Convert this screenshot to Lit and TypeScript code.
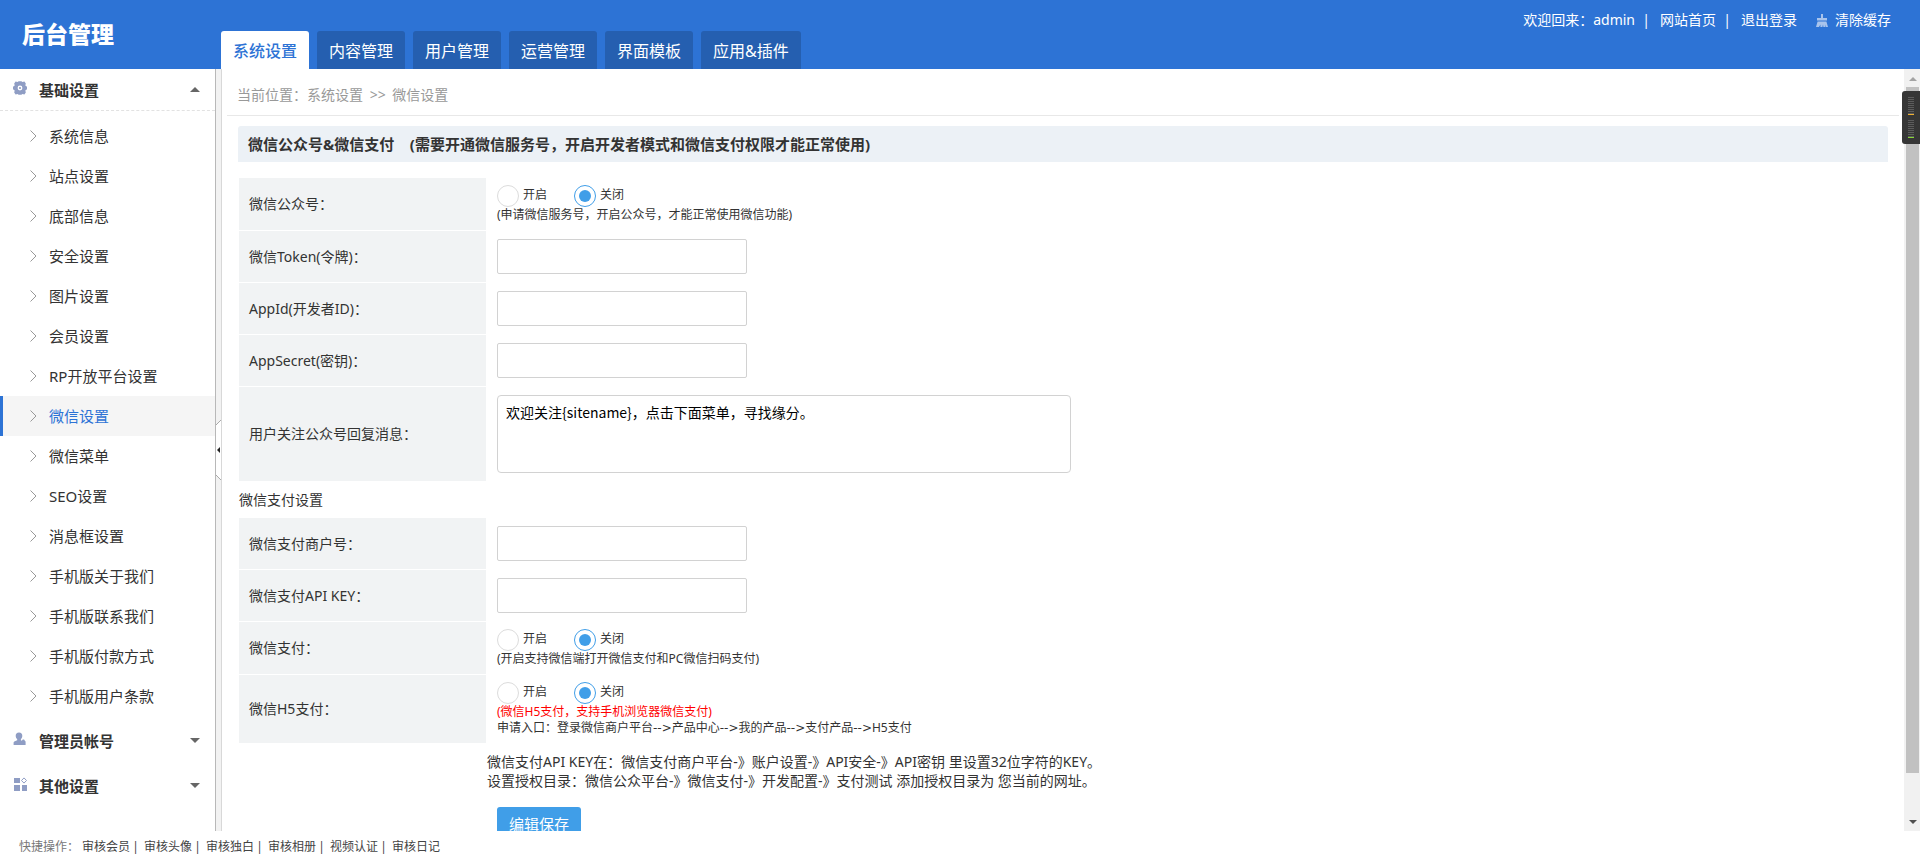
import { LitElement, html, css, svg } from "lit";
import { customElement, state } from "lit/decorators.js";
import { classMap } from "lit/directives/class-map.js";

const TABS = ["系统设置", "内容管理", "用户管理", "运营管理", "界面模板", "应用&插件"];

const MENU = [
  "系统信息", "站点设置", "底部信息", "安全设置", "图片设置", "会员设置",
  "RP开放平台设置", "微信设置", "微信菜单", "SEO设置", "消息框设置",
  "手机版关于我们", "手机版联系我们", "手机版付款方式", "手机版用户条款",
];

const QUICK = ["审核会员", "审核头像", "审核独白", "审核相册", "视频认证", "审核日记"];

const H5_STEPS = ["申请入口：登录微信商户平台", "产品中心", "我的产品", "支付产品", "H5支付"];

const gearIcon = svg`<svg class="icon" viewBox="0 0 14 14" width="14" height="14" aria-hidden="true">
  <path fill="#8f9dc4" fill-rule="evenodd" d="M2.6 0.4 L4.6 1 L5.6 0.3 H8.4 L9.4 1 L11.4 0.4 L12.8 2.6 L12.3 4.4 L14 5.8 V8.2 L12.3 9.6 L12.8 11.4 L11.4 13.6 L9.4 13 L8.4 13.7 H5.6 L4.6 13 L2.6 13.6 L1.2 11.4 L1.7 9.6 L0 8.2 V5.8 L1.7 4.4 L1.2 2.6 Z M7 4.6 A2.4 2.4 0 1 0 7 9.4 A2.4 2.4 0 1 0 7 4.6 Z"/>
  <circle cx="7" cy="7" r="1.1" fill="#8f9dc4"/></svg>`;

const userIcon = svg`<svg class="icon" viewBox="0 0 14 14" width="14" height="14" aria-hidden="true">
  <path fill="#8f9dc4" d="M6 0.5 C8.2 0.5 9.4 2 9.3 4 C9.2 5.6 8.6 6.4 7.9 7.2 V8.2 L9 8.8 C9.2 7.2 11.6 7.2 11.8 8.8 L12.6 9.4 V13 H0.6 V10.6 C0.8 9.4 2.6 9 4.2 8.3 V7.2 C3.4 6.4 2.8 5.6 2.7 4 C2.6 2 3.8 0.5 6 0.5 Z"/></svg>`;

const blocksIcon = svg`<svg class="icon" viewBox="0 0 14 14" width="14" height="14" aria-hidden="true">
  <g fill="#8f9dc4"><rect x="1" y="1" width="6" height="5"/><rect x="1" y="8" width="6" height="6"/><rect x="9" y="8" width="5" height="6"/></g>
  <path fill="none" stroke="#8f9dc4" d="M11 0.9 L13.5 3.5 L11 6.1 L8.5 3.5 Z"/></svg>`;

const broomIcon = svg`<svg viewBox="0 0 12 13" width="12" height="13" aria-hidden="true">
  <path fill="#a9c4ec" d="M5 0 H7 V4 H11 V6.4 H1 V4 H5 Z M1.6 7.4 H10.4 L12 13 H10 L9.4 10.6 V13 H7.4 L7 10.6 L6.4 13 H4.4 V10.6 L3 13 H0 Z"/></svg>`;

@customElement("app-root")
export class AppRoot extends LitElement {
  @state() private activeTab = 0;
  @state() private activeItem = 7;

  static styles = css`
    :host {
      display: flex;
      flex-direction: column;
      height: 100vh;
      overflow: hidden;
      background: #fff;
      color: #333;
      font: 14px/20px "Noto Sans", "Noto Sans CJK SC", sans-serif;
    }
    * { box-sizing: border-box; }
    a { color: inherit; text-decoration: none; }
    button, input, textarea { font: inherit; margin: 0; }

    .header { display: flex; height: 69px; flex: none; background: #2d73d5; color: #fff; }
    .logo {
      width: 221px;
      margin: 0;
      padding-left: 22px;
      font: 900 23px/66px "Noto Sans CJK SC", sans-serif;
    }
    .tabs { display: flex; gap: 8px; align-self: flex-end; }
    .tab {
      height: 38px;
      padding: 0 12px;
      border-radius: 3px 3px 0 0;
      background: #255fb0;
      font-size: 16px;
      line-height: 40px;
    }
    .tab.on { background: #fff; color: #2d73d5; font-weight: 500; }
    .tools { display: flex; align-items: center; height: 40px; margin-left: auto; padding-right: 29px; }
    .bar { width: 8px; margin: 0 10px 0 7px; text-align: center; }
    .clear { display: flex; align-items: center; gap: 7px; margin-left: 19px; }

    .body { display: flex; flex: 1; min-height: 0; }
    .side { width: 215px; flex: none; overflow: hidden; }
    .group {
      display: flex;
      align-items: center;
      width: 100%;
      height: 45px;
      padding: 0 15px 2px 13px;
      border: 0;
      background: none;
      color: #333;
      font-size: 15px;
      font-weight: 700;
      text-align: left;
    }
    .group.open { height: 42px; padding-bottom: 0; border-bottom: 1px dashed #e2e2e2; }
    .icon { margin: -3px 12px 0 0; }
    .caret { margin-left: auto; border: 5px solid transparent; border-bottom-width: 0; border-top-color: #666; }
    .group.open .caret { border-width: 0 5px 5px; border-bottom-color: #666; }
    .menu { margin: 0; padding: 5px 0 3px; list-style: none; }
    .item {
      display: flex;
      align-items: center;
      gap: 12px;
      height: 40px;
      padding-left: 27px;
      border-left: 3px solid transparent;
      font-size: 15px;
    }
    .item.on { border-left-color: #2d73d5; background: #f5f5f5; color: #2d73d5; }

    .gutter {
      display: flex;
      align-items: center;
      width: 7px;
      flex: none;
      border: 1px solid #d8d8d8;
      border-width: 0 1px;
      border-left-color: #b8b8b8;
      background: #f2f2f2;
    }
    .fold { width: 5px; height: 60px; padding: 0; border: 0; background: none; display: block; }
    .fold svg { display: block; }

    .main { flex: 1; min-width: 0; overflow: hidden; padding: 0 16px; }
    .crumbs {
      height: 47px;
      margin: 0 -11px;
      padding: 16px 10px 0;
      border-bottom: 1px solid #e8e8e8;
      color: #999;
    }
    .sep { padding: 0 3px; }
    .title {
      margin: 10px 0 16px;
      padding: 0 10px;
      border-radius: 3px 3px 0 0;
      background: #ecf1f6;
      font-size: 15px;
      font-weight: 700;
      line-height: 36px;
      white-space: pre;
    }
    .form { padding-left: 1px; }
    .rows { display: grid; row-gap: 1px; }
    .row { display: grid; grid-template-columns: 247px 1fr; column-gap: 11px; }
    .name { display: flex; align-items: center; padding-left: 10px; background: #f1f3f4; }
    .cell { padding: 8px 0; }
    .cell.choice { padding: 7px 0; }
    .text { display: block; width: 250px; height: 35px; padding: 0 8px; border: 1px solid #d2d2d2; border-radius: 2px; background: #fff; }
    .area {
      display: block;
      width: 574px;
      max-width: 100%;
      height: 78px;
      padding: 7px 8px;
      border: 1px solid #d2d2d2;
      border-radius: 4px;
      color: #000;
      font: 14px/18px "Noto Sans CJK SC", sans-serif;
      resize: none;
    }
    .radios { display: flex; gap: 27px; height: 22px; font-size: 12px; line-height: 20px; }
    .option { display: flex; gap: 4px; }
    .radio {
      display: grid;
      place-content: center;
      width: 22px;
      height: 22px;
      appearance: none;
      border: 1px solid #dcdcdc;
      border-radius: 50%;
      background: #fff;
    }
    .radio:checked { border-color: #409ee8; }
    .radio:checked::before { content: ""; width: 12px; height: 12px; border-radius: 50%; background: #409ee8; }
    .hint { margin: 0; font-size: 12px; line-height: 16px; }
    .hint.warn { color: #f00; }
    .step { font-family: "DejaVu Sans", sans-serif; }
    .section { margin: 0; font-size: 14px; font-weight: 400; line-height: 37px; }
    .note { margin: 9px 0 17px 248px; line-height: 19px; }
    .save { height: 35px; margin-left: 258px; padding: 0 12px 2px; border: 0; border-radius: 3px; background: #409ee8; color: #fff; font-size: 15px; }

    .scroll { display: flex; flex-direction: column; position: relative; width: 16px; flex: none; padding: 8px 1px 7px 2px; background: #f1f1f1; }
    .arrow { align-self: center; border: 4px solid transparent; }
    .arrow.up { border-width: 0 4px 4px; border-bottom-color: #a3a3a3; }
    .arrow.down { border-width: 4px 4px 0; border-top-color: #505050; }
    .thumb { flex: 1; margin: 6px 0 47px; background: #c1c1c1; }
    .meter {
      position: absolute;
      top: 22px;
      right: 0;
      display: grid;
      align-content: center;
      gap: 5px;
      width: 18px;
      height: 53px;
      padding-left: 6px;
      border-radius: 3px 0 0 3px;
      background: #363636;
    }
    .level { width: 6px; height: 18px; border-bottom: 1px solid #f0b030; background: repeating-linear-gradient(#5c5c5c 0 1px, #363636 1px 2px) padding-box; }
    .level.low { border-bottom-color: #86d636; }

    .footer { display: flex; align-items: center; flex: none; height: 32px; padding-left: 19px; font-size: 12px; color: #444; }
    .lead { width: 63px; color: #777; }
    .quick + .quick::before { content: "|"; display: inline-block; width: 7px; margin: 0 5px 0 2px; text-align: center; }
  `;

  private label(text: string, id: string) {
    return html`<label class="name" for=${id}>${text}</label>`;
  }

  private textRow(text: string, id: string) {
    return html`<div class="row">
      ${this.label(text, id)}
      <div class="cell"><input class="text" type="text" id=${id} /></div>
    </div>`;
  }

  private radioRow(text: string, id: string, hints: unknown) {
    return html`<div class="row" role="radiogroup" aria-labelledby=${id}>
      <span class="name" id=${id}>${text}</span>
      <div class="cell choice">
        <div class="radios">
          <label class="option"><input class="radio" type="radio" name=${id} value="1" />开启</label>
          <label class="option"><input class="radio" type="radio" name=${id} value="0" checked />关闭</label>
        </div>
        ${hints}
      </div>
    </div>`;
  }

  render() {
    return html`
      <header class="header">
        <h1 class="logo">后台管理</h1>
        <nav class="tabs">
          ${TABS.map((t, i) => html`<a href="#" class=${classMap({ tab: true, on: i === this.activeTab })}
            @click=${(e: Event) => { e.preventDefault(); this.activeTab = i; }}>${t}</a>`)}
        </nav>
        <div class="tools">
          <span>欢迎回来：admin</span><span class="bar">|</span>
          <a href="#">网站首页</a><span class="bar">|</span>
          <a href="#">退出登录</a>
          <a href="#" class="clear">${broomIcon}清除缓存</a>
        </div>
      </header>

      <div class="body">
        <nav class="side">
          <button class="group open" aria-expanded="true">${gearIcon}基础设置<span class="caret"></span></button>
          <ul class="menu">
            ${MENU.map((m, i) => html`<li><a href="#" class=${classMap({ item: true, on: i === this.activeItem })}
              @click=${(e: Event) => { e.preventDefault(); this.activeItem = i; }}>
              <svg width="7" height="12" viewBox="0 0 7 12" aria-hidden="true"><path d="M0.5 0.5 L6 6 L0.5 11.5" fill="none" stroke="#999"/></svg>${m}</a></li>`)}
          </ul>
          <button class="group" aria-expanded="false">${userIcon}管理员帐号<span class="caret"></span></button>
          <button class="group" aria-expanded="false">${blocksIcon}其他设置<span class="caret"></span></button>
        </nav>
        <div class="gutter">
          <button class="fold" aria-label="收起菜单">
            <svg width="5" height="60" viewBox="0 0 5 60"><path d="M0 5 L5 0 V60 L0 55 Z" fill="#fff"/><path d="M0 5 L5 0 M5 60 L0 55" stroke="#aaa" fill="none"/><path d="M4 27 V33 L1 30 Z" fill="#222"/></svg>
          </button>
        </div>

        <main class="main">
          <div class="crumbs">当前位置：系统设置<span class="sep"> &gt;&gt; </span>微信设置</div>
          <h2 class="title">${"微信公众号&微信支付    (需要开通微信服务号，开启开发者模式和微信支付权限才能正常使用)"}</h2>
          <form class="form" @submit=${(e: Event) => e.preventDefault()}>
            <div class="rows">
              ${this.radioRow("微信公众号：", "mp", html`<p class="hint">(申请微信服务号，开启公众号，才能正常使用微信功能)</p>`)}
              ${this.textRow("微信Token(令牌)：", "token")}
              ${this.textRow("AppId(开发者ID)：", "appid")}
              ${this.textRow("AppSecret(密钥)：", "secret")}
              <div class="row">
                ${this.label("用户关注公众号回复消息：", "reply")}
                <div class="cell"><textarea class="area" id="reply" spellcheck="false" .value=${"欢迎关注{sitename}，点击下面菜单，寻找缘分。"}></textarea></div>
              </div>
            </div>
            <h3 class="section">微信支付设置</h3>
            <div class="rows">
              ${this.textRow("微信支付商户号：", "mch")}
              ${this.textRow("微信支付API KEY：", "apikey")}
              ${this.radioRow("微信支付：", "pay", html`<p class="hint">(开启支持微信端打开微信支付和PC微信扫码支付)</p>`)}
              ${this.radioRow("微信H5支付：", "h5", html`
                <p class="hint warn">(微信H5支付，支持手机浏览器微信支付)</p>
                <p class="hint">${H5_STEPS.map((s, i) => html`${i ? html`<span class="step">--&gt;</span>` : ""}${s}`)}</p>`)}
            </div>
            <p class="note">
              微信支付API KEY在：微信支付商户平台-》账户设置-》API安全-》API密钥 里设置32位字符的KEY。<br />
              设置授权目录：微信公众平台-》微信支付-》开发配置-》支付测试 添加授权目录为 您当前的网址。
            </p>
            <button class="save" type="submit">编辑保存</button>
          </form>
        </main>

        <div class="scroll" aria-hidden="true">
          <span class="arrow up"></span><span class="thumb"></span><span class="arrow down"></span>
          <div class="meter"><span class="level"></span><span class="level low"></span></div>
        </div>
      </div>

      <footer class="footer">
        <span class="lead">快捷操作：</span>
        ${QUICK.map((q) => html`<span class="quick"><a href="#">${q}</a></span>`)}
      </footer>
    `;
  }
}
